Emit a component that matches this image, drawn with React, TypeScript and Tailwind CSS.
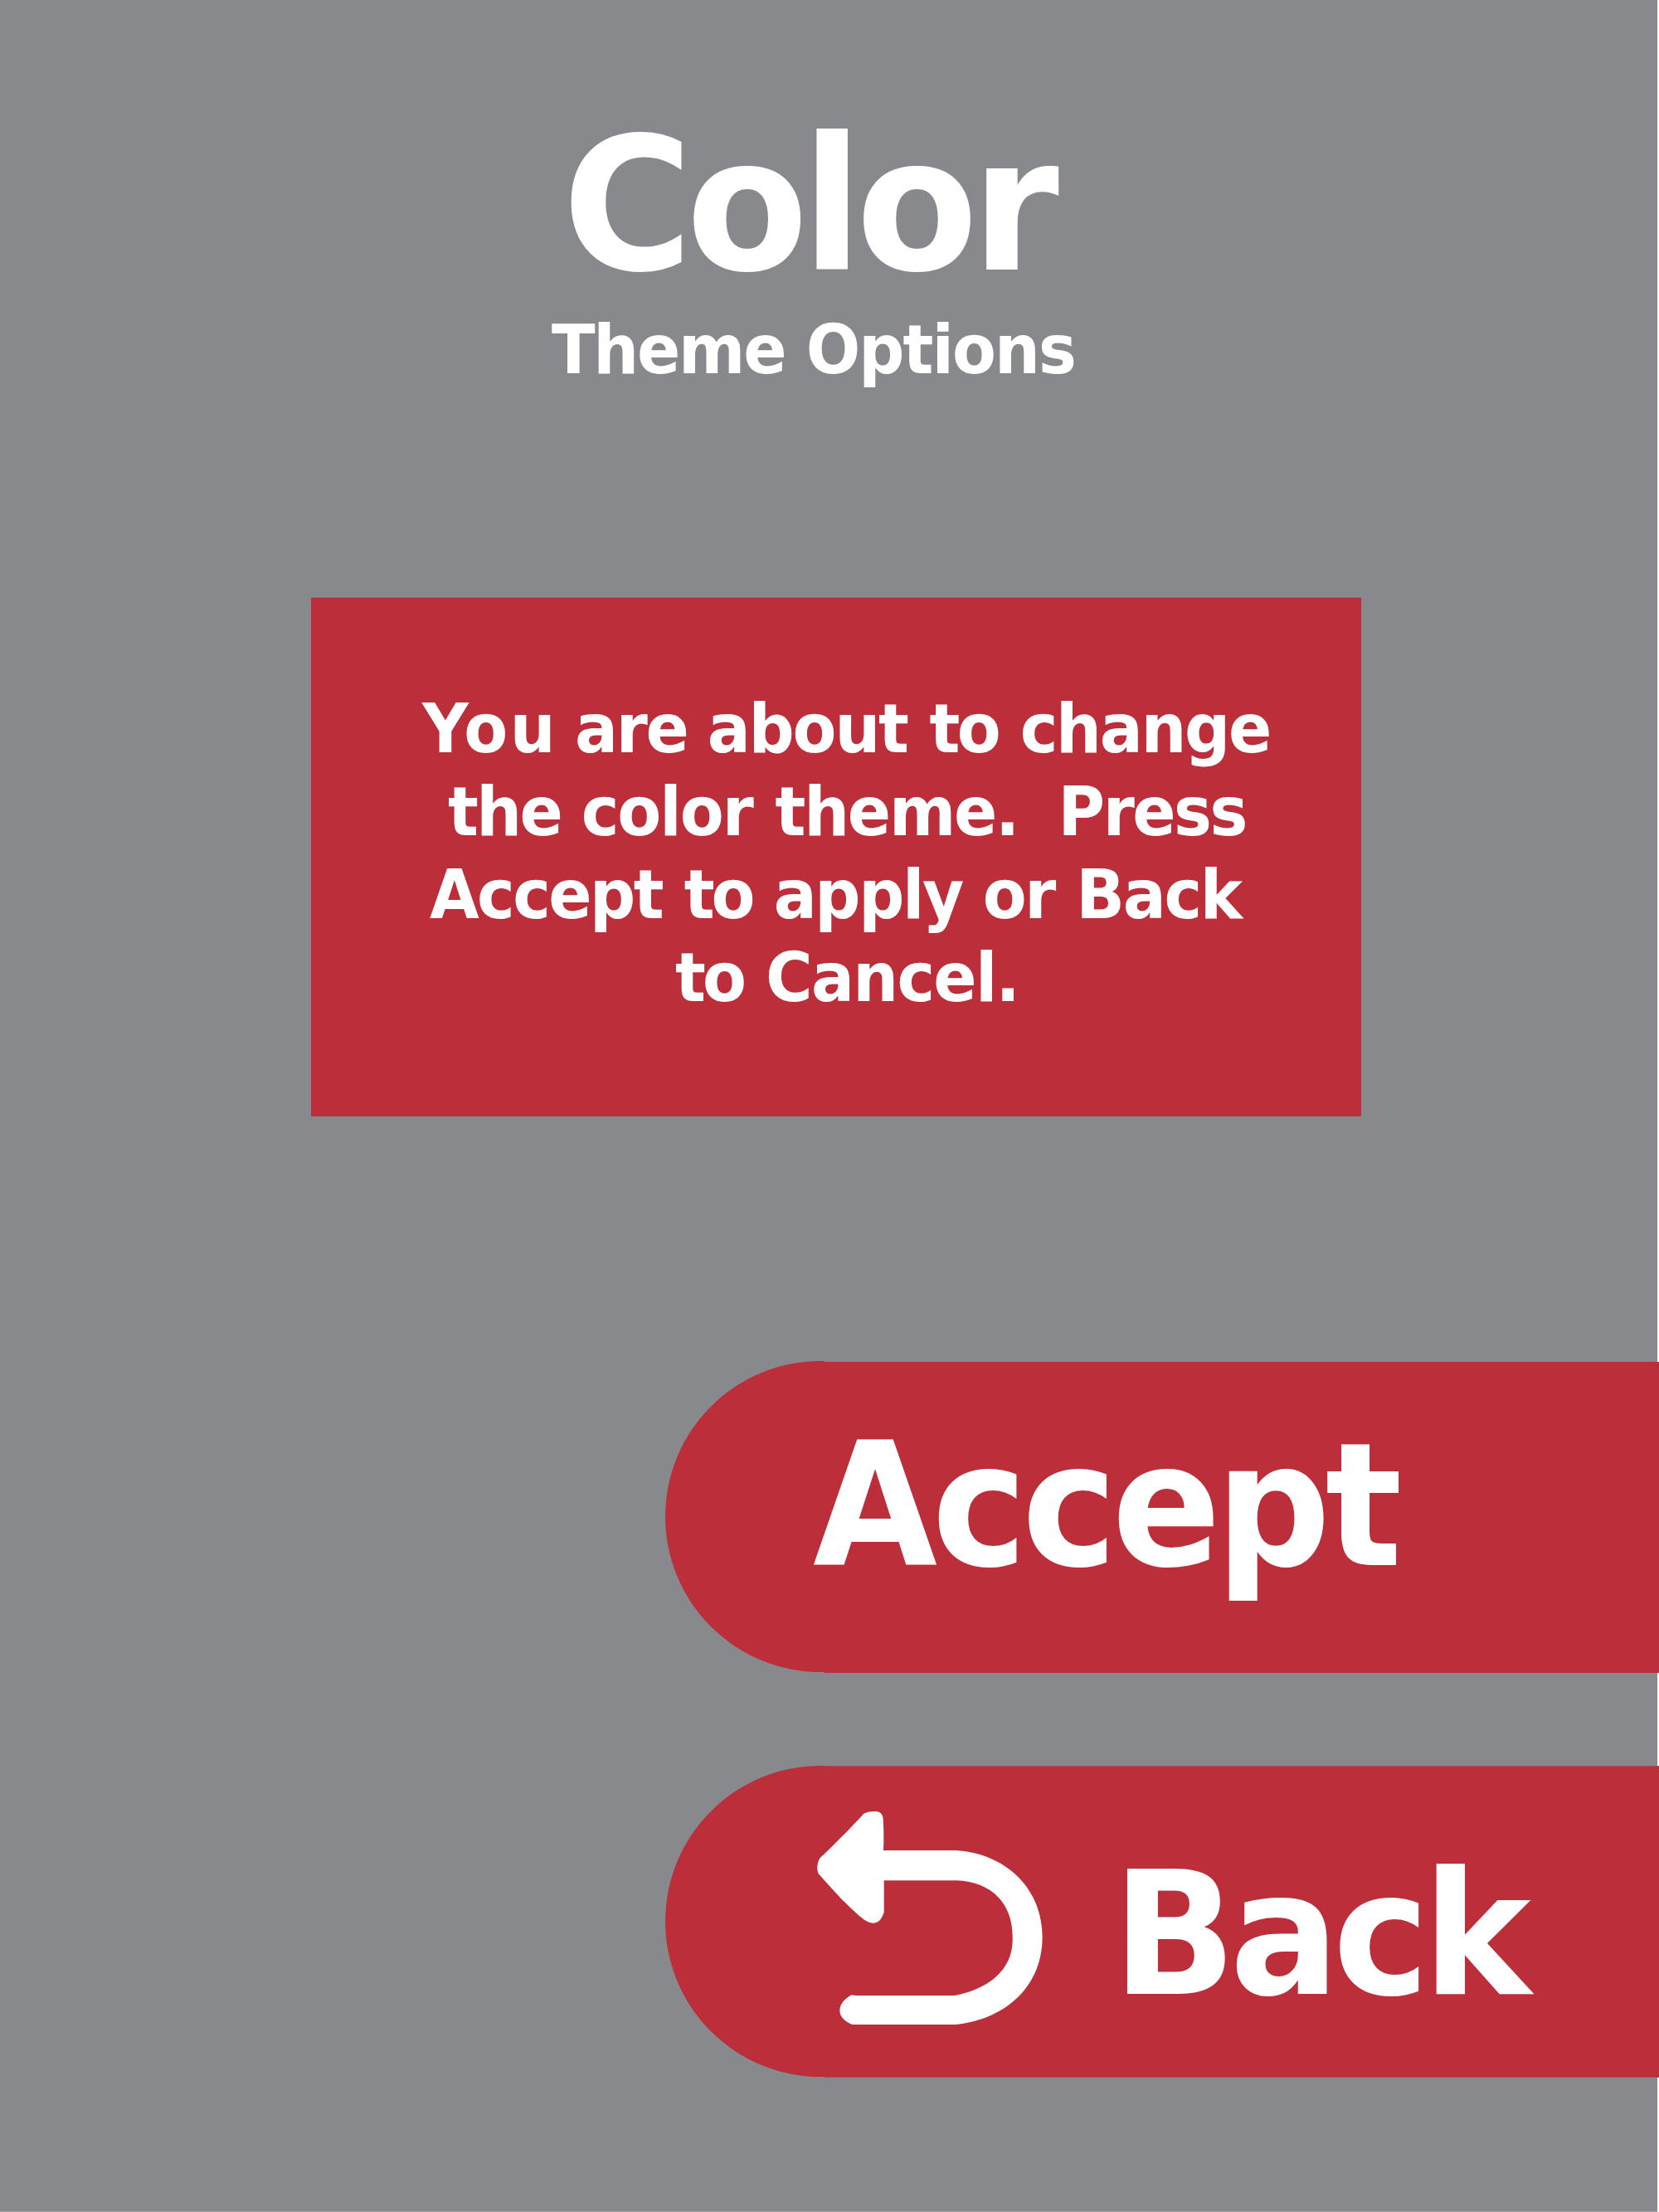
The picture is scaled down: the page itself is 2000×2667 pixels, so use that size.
type Word = { text: string; className: string };

function Line({ words, className }: { words: Word[]; className: string }) {
  return (
    <p className={`flex h-[100px] w-max origin-left scale-x-[1.04] whitespace-pre text-[82.4px] leading-[100px] ${className}`}>
      {words.map((word, i) => (
        <span key={i} className={word.className}>
          {word.text}
        </span>
      ))}
    </p>
  );
}

const subtitle: Word[] = [
  { text: "Theme ", className: "w-[294.9px] tracking-[-0.026em]" },
  { text: "Options", className: "tracking-[-0.0225em]" },
];

const message: { className: string; words: Word[] }[] = [
  {
    className: "ml-[134px]",
    words: [
      { text: "You ", className: "w-[176.9px] tracking-[0.028em]" },
      { text: "are ", className: "w-[153.7px] tracking-[-0.0265em]" },
      { text: "about ", className: "w-[257.4px] tracking-[-0.0255em]" },
      { text: "to ", className: "w-[105px] tracking-[-0.042em]" },
      { text: "change", className: "tracking-[-0.0266em]" },
    ],
  },
  {
    className: "ml-[165.4px]",
    words: [
      { text: "the ", className: "w-[154.5px] tracking-[-0.03em]" },
      { text: "color ", className: "w-[224.9px] tracking-[-0.0235em]" },
      { text: "theme.  ", className: "w-[327.9px] tracking-[-0.0262em]" },
      { text: "Press", className: "tracking-[-0.0283em]" },
    ],
  },
  {
    className: "ml-[143px]",
    words: [
      { text: "Accept ", className: "w-[294.9px] tracking-[-0.03em]" },
      { text: "to ", className: "w-[103.9px] tracking-[-0.046em]" },
      { text: "apply ", className: "w-[242.4px] tracking-[-0.0276em]" },
      { text: "or ", className: "w-[108.1px] tracking-[-0.0295em]" },
      { text: "Back ", className: "tracking-[-0.0265em]" },
    ],
  },
  {
    className: "ml-[438.5px]",
    words: [
      { text: "to ", className: "w-[104.9px] tracking-[-0.046em]" },
      { text: "Cancel.", className: "tracking-[-0.0201em]" },
    ],
  },
];

function BackArrow() {
  return (
    <svg viewBox="60 60 840 800" className="mt-[50px] -ml-[14px] h-[266.67px] w-[280px] shrink-0" fill="#fff">
      <path d="M244 80 C255 74 268 72 282 72 H288 C303 72 313 83 314 99 C316 135 317 165 315 213 H580 C740 224 888 332 890 528 C888 724 735 828 575 843 H202 C170 830 157 812 157 793 C157 770 172 751 200 736 L216 738 H572 C695 716 786 644 782 530 C784 400 700 326 580 322 H317 V437 C310 460 297 476 277 476 C258 474 243 463 228 450 C180 410 130 353 80 297 C74 285 73 256 88 238 L96 231 C150 180 195 133 244 80 Z" />
    </svg>
  );
}

export default function App() {
  return (
    <main className="h-[2667px] w-[2000px] overflow-hidden bg-[#88898d] font-['DejaVu_Sans_Condensed','DejaVu_Sans',sans-serif] font-bold text-white [font-stretch:condensed]">
      <div className="flex h-[2667px] flex-col bg-[linear-gradient(to_left,#fff_2px,transparent_2px),linear-gradient(to_top,#a3a4a7_1px,transparent_1px)]">
        <header className="flex h-[720px] flex-col pt-[148px]">
          <h1 className="ml-[677.5px] h-[200px] w-max origin-left scale-x-[1.063] text-[223.5px] leading-[200px] tracking-[-0.032em]">
            Color
          </h1>
          <div className="mt-[24px] ml-[665px]">
            <Line words={subtitle} className="" />
          </div>
        </header>

        <section className="ml-[375px] h-[626px] w-[1266px] border-t border-[#97666d] bg-[#bb2e3a] pt-[108px]">
          {message.map((line, i) => (
            <Line key={i} words={line.words} className={line.className} />
          ))}
        </section>

        <nav className="mt-[295px] ml-[802px] flex flex-col gap-[112px]">
          <button className="flex h-[376px] text-left">
            <span className="h-[375px] w-[192px] shrink-0 rounded-l-[187.5px] bg-[#bb2e3a]" />
            <span className="mt-px flex h-[375px] flex-1 bg-[#bb2e3a] pt-[73px]">
              <span className="-ml-[14px] h-[200px] origin-left scale-x-[1.037] text-[207.5px] leading-[200px] tracking-[-0.0292em]">
                Accept
              </span>
            </span>
          </button>
          <button className="flex h-[376px] text-left">
            <span className="h-[375px] w-[192px] shrink-0 rounded-l-[187.5px] bg-[#bb2e3a]" />
            <span className="flex h-[376px] flex-1 border-y border-[#a55059] bg-[#bb2e3a]">
              <BackArrow />
              <span className="mt-[102px] ml-[81px] h-[200px] origin-left scale-x-[1.05] text-[207.5px] leading-[200px] tracking-[-0.0358em]">
                Back
              </span>
            </span>
          </button>
        </nav>
      </div>
    </main>
  );
}
